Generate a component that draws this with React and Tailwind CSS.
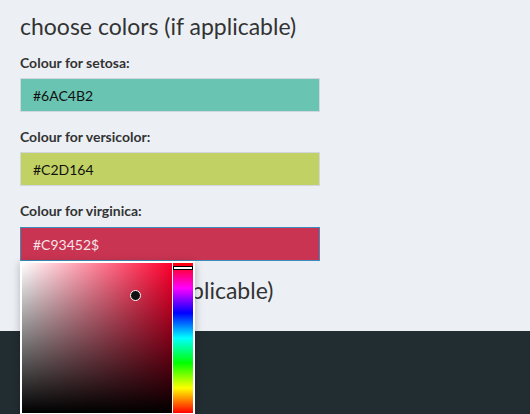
import React from "react";

const fields = [
  { label: "Colour for setosa:", value: "#6AC4B2", bg: "bg-[#6AC4B2]", text: "text-[#111]" },
  { label: "Colour for versicolor:", value: "#C2D164", bg: "bg-[#C2D164]", text: "text-[#111]" },
];

const ColourPicker = () => (
  <div className="absolute left-0 top-[34px] z-10 flex gap-[1px] bg-white p-[2px] shadow-[0_2px_8px_rgba(0,0,0,0.25)]">
    {/* saturation / value square */}
    <div className="relative h-[150px] w-[150px] bg-[linear-gradient(to_top,#000,transparent),linear-gradient(to_right,#fff,#ff002e)]">
      <div className="absolute left-[108px] top-[27px] h-[11px] w-[11px] rounded-full border border-white bg-[#111]" />
    </div>
    {/* hue bar */}
    <div className="relative h-[150px] w-[20px] bg-[linear-gradient(to_bottom,#f00,#f0f,#00f,#0ff,#0f0,#ff0,#f00)]">
      <div className="absolute left-0 top-[3px] h-[4px] w-[20px] border border-black bg-white" />
    </div>
  </div>
);

export default function App() {
  return (
    <div className="flex h-[414px] w-[530px] flex-col overflow-hidden font-['Lato',sans-serif] text-[#333]">
      <div className="h-[331px] shrink-0 bg-[#ecf0f5] pl-[20px] pt-[12px]">
        <h3 className="mb-[13px] text-[23px] leading-[28px]">choose colors (if applicable)</h3>

        {fields.map((f) => (
          <div key={f.label} className="mb-[15px] w-[300px]">
            <label className="mb-[5px] block text-[14px] font-bold leading-[20px]">{f.label}</label>
            <div className={`flex h-[34px] items-center border border-[#d2d6de] px-[12px] text-[14px] ${f.bg} ${f.text}`}>
              {f.value}
            </div>
          </div>
        ))}

        <div className="mb-[15px] w-[300px]">
          <label className="mb-[6px] block text-[14px] font-bold leading-[20px]">Colour for virginica:</label>
          <div className="relative">
            <div className="flex h-[34px] items-center border border-[#3c8dbc] bg-[#C93452] px-[12px] text-[14px] text-[#f6e4e8]">
              #C93452$
            </div>
            <ColourPicker />
          </div>
        </div>

        <h3 className="text-[23px] leading-[28px]">choose size (if applicable)</h3>
      </div>
      <div className="flex-1 bg-[#222d32]" />
    </div>
  );
}
